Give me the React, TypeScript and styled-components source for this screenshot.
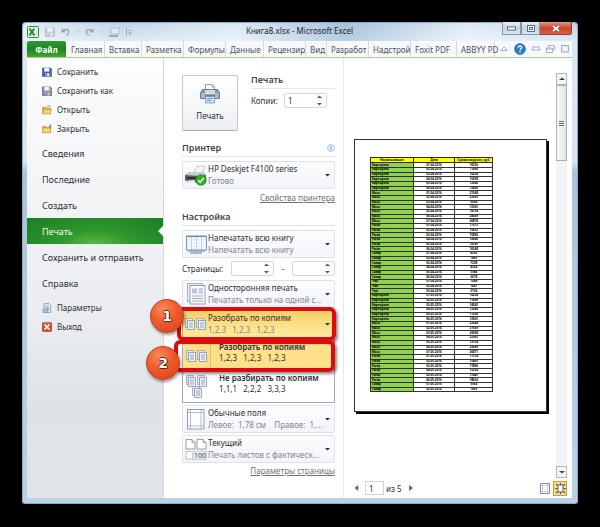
import React from 'react';
import styled, { createGlobalStyle, css } from 'styled-components';

const GlobalStyle = createGlobalStyle`
  * { box-sizing: border-box; }
  body { margin: 0; background: #000; }
  body, button, input {
    font-family: 'Noto Sans', 'Open Sans', sans-serif;
    font-size: 8px;
    color: #2b2f36;
  }
  button, input { margin: 0; padding: 0; border: 0; background: none; }
  svg { display: block; flex: none; }
`;

const Desktop = styled.div`
  display: flex;
  min-height: 100vh;
  padding: 22px 22px 23px;
  background: #000;
`;

const Window = styled.div`
  flex: 1;
  min-width: 0;
  display: flex;
  flex-direction: column;
  padding: 0 6px 6px 5px;
  border-radius: 4px 4px 3px 3px;
  background:
    linear-gradient(90deg, rgba(255, 255, 255, 0.55), transparent 18%, rgba(255, 255, 255, 0.45) 38%, rgba(120, 160, 195, 0.35) 58%, rgba(255, 255, 255, 0.5) 80%, transparent) top / 100% 19px no-repeat,
    linear-gradient(180deg, #bdd3e8 0, #dbe8f4 19px, #d8e5f1 140px, #aac4da 150px, #b9d2e7 100%);
  box-shadow: inset 0 0 0 1px #8fa9bf;
`;

const TitleBar = styled.header`
  display: grid;
  grid-template-columns: 1fr auto 1fr;
  height: 19px;
`;

const QuickAccess = styled.div`
  display: flex;
  align-items: center;
  gap: 6px;
  color: #98a7b6;
`;

const ToolButton = styled.button`
  display: flex;
  color: inherit;
`;

const Title = styled.h1`
  margin: 0;
  font-size: 8px;
  line-height: 18px;
  font-weight: 400;
  color: #1d232b;
`;

const WindowControls = styled.div`
  display: flex;
  justify-content: flex-end;
  align-items: flex-start;
`;

const WindowButton = styled.button<{ $close?: boolean }>`
  display: grid;
  place-items: center;
  width: ${p => (p.$close ? 32 : 19)}px;
  height: 13px;
  border: 1px solid #8496a8;
  border-top: 0;
  border-left-width: ${p => (p.$close ? 0 : 1)}px;
  border-radius: ${p => (p.$close ? '0 0 3px 0' : '0')};
  color: #5c6e82;
  background: linear-gradient(#e4edf6, #c3d3e2 50%, #d9e6f2);
  ${p => p.$close && css`
    color: #fff;
    background: linear-gradient(#dd9a86, #c9462a 50%, #d8603c);
    border-color: #8d4335;
  `}
`;

const Ribbon = styled.nav`
  display: grid;
  grid-template-columns: 40fr 38fr 37fr 42fr 42fr 38fr 42fr 21fr 42fr 42fr 46fr 38fr 77fr;
  height: 17px;
  background: #f6f8fa;
  border-bottom: 1px solid #a9cf93;
`;

const Tab = styled.button<{ $active?: boolean }>`
  min-width: 0;
  padding: 0 0 0 4px;
  text-align: left;
  white-space: nowrap;
  line-height: 15px;
  color: #4c535c;
  border-right: 1px solid #d5dae0;
  ${p => p.$active && css`
    padding: 0;
    margin-right: 1px;
    text-align: center;
    font-weight: 700;
    color: #fff;
    border: 0;
    border-radius: 2px 2px 0 0;
    background: linear-gradient(#2f9a33, #1b8520 50%, #3fa92f);
  `}
`;

const RibbonTools = styled.div`
  min-width: 0;
  display: flex;
  align-items: center;
  justify-content: space-between;
  padding: 0 3px 1px 5px;
  color: #a3afbb;
`;

const Backstage = styled.main`
  flex: 1;
  display: grid;
  grid-template-columns: minmax(0, 137fr) minmax(0, 180fr) minmax(0, 228fr);
  background: #fff;
`;

const Sidebar = styled.nav`
  display: flex;
  flex-direction: column;
  padding-top: 4px;
  border-right: 1px solid #d5d9de;
  background: linear-gradient(#fdfdfe 0, #f6f7f9 20%, #e9ebee 62%, #dfe3e6 78%, #e1e4e7 100%);
`;

const Group = styled.div`
  display: flex;
  flex-direction: column;
  padding-bottom: 2px;
`;

const Command = styled.button`
  display: flex;
  align-items: center;
  gap: 5px;
  height: 19px;
  padding-left: 15px;
  white-space: nowrap;
`;

const Section = styled.button<{ $active?: boolean }>`
  position: relative;
  height: 26px;
  padding-left: 15px;
  text-align: left;
  white-space: nowrap;
  font-size: 9px;
  color: ${p => (p.$active ? '#f4fbef' : '#2b2f36')};
  ${p => p.$active && css`
    background: radial-gradient(ellipse at 50% 100%, #5cb848 0, #2f9a2b 35%, #23872a 75%, #1c7d25 100%);
    &::after {
      content: '';
      position: absolute;
      right: -1px;
      top: 7px;
      border: 6px solid transparent;
      border-left-width: 0;
      border-right-color: #fff;
    }
  `}
`;

const Settings = styled.section`
  display: flex;
  flex-direction: column;
  padding: 17px 8px 0 18px;
  border-right: 1px solid #e6e8ec;
`;

const PrintRow = styled.div`
  display: flex;
  gap: 13px;
  margin-bottom: 9px;
`;

const PrintButton = styled.button`
  flex: none;
  display: flex;
  flex-direction: column;
  align-items: center;
  justify-content: space-between;
  width: 56px;
  height: 56px;
  padding: 7px 0 8px;
  line-height: 12px;
  border: 1px solid #c3c7ce;
  border-bottom-color: #a9adb5;
  border-radius: 2px;
  background: linear-gradient(#fff, #f5f6f8 60%, #eceef1);
`;

const PrintOptions = styled.div`
  flex: 1;
  min-width: 0;
`;

const Heading = styled.h2<{ $top?: boolean }>`
  display: flex;
  align-items: center;
  justify-content: space-between;
  height: ${p => (p.$top ? 14 : 17)}px;
  margin: 0 0 4px;
  padding-bottom: ${p => (p.$top ? 4 : 1)}px;
  font-size: 9px;
  line-height: 12px;
  font-weight: 600;
  color: #3f464f;
  border-bottom: 1px solid #e3e6ea;
`;

const Field = styled.div<{ $pages?: boolean }>`
  display: flex;
  align-items: center;
  justify-content: space-between;
  height: 15px;
  margin: ${p => (p.$pages ? '3px 0 4px' : '0 8px 0 0')};
`;

const Spinner = styled.div`
  display: flex;
  align-items: center;
  width: 43px;
  height: 15px;
  padding-right: 4px;
  border: 1px solid #d3d6dc;
  border-radius: 2px;
  background: #fff;
`;

const SpinnerInput = styled.input`
  flex: 1;
  min-width: 0;
  height: 13px;
  padding-left: 3px;
  outline: 0;
`;

const SpinnerArrows = styled.div`
  display: flex;
  flex-direction: column;
  gap: 3px;
  color: #555b63;
`;

const Picker = styled.button<{ $open?: boolean }>`
  display: flex;
  align-items: center;
  width: 100%;
  height: 28px;
  padding: 0 4px 0 1px;
  border: 1px solid ${p => (p.$open ? '#c6a94e' : '#dfe2e8')};
  border-radius: 2px;
  text-align: left;
  background: ${p => (p.$open ? 'linear-gradient(#f3cf66, #fbdf83 50%, #ffec9f)' : 'linear-gradient(#fcfdfe, #f3f4f8)')};
`;

const IconSlot = styled.span`
  flex: none;
  display: grid;
  place-items: center;
  width: 24px;
`;

const Lines = styled.span`
  flex: 1;
  min-width: 0;
  display: flex;
  flex-direction: column;
  line-height: 12px;
  white-space: nowrap;
`;

const Line = styled.span<{ $muted?: boolean; $strong?: boolean }>`
  white-space: pre;
  font-weight: ${p => (p.$strong ? 600 : 400)};
  color: ${p => (p.$muted ? '#82868d' : '#2b2f36')};
`;

const LinkRow = styled.div<{ $gap?: boolean }>`
  margin: ${p => (p.$gap ? '2px 0 4px' : '1px 0 0')};
  text-align: right;
  line-height: 14px;
`;

const TextLink = styled.a`
  color: #6d727a;
  text-decoration: underline;
`;

const Stack = styled.div`
  display: flex;
  flex-direction: column;
  gap: 2px;
`;

const Anchor = styled.div`
  position: relative;
`;

const Menu = styled.div`
  display: flex;
  flex-direction: column;
  margin: 1px 0 0;
  border: 1px solid #a6abb3;
  background: #fff;
`;

const MenuItem = styled.button<{ $selected?: boolean }>`
  position: relative;
  display: flex;
  height: 31px;
  text-align: left;
  background: ${p => (p.$selected ? '#fde18a' : '#fff')};
  ${Lines} { padding: 1px 0 0 8px; line-height: 11px; }
  ${IconSlot} {
    width: 28px;
    height: 100%;
    border-right: 1px solid ${p => (p.$selected ? '#dcc071' : 'transparent')};
  }
`;

const Highlight = styled.span<{ $item?: boolean }>`
  position: absolute;
  z-index: 1;
  top: ${p => (p.$item ? 0 : -3)}px;
  left: ${p => (p.$item ? -9 : -5)}px;
  right: -1px;
  height: ${p => (p.$item ? 32 : 34)}px;
  border: 4px solid #dc0b10;
  border-radius: 6px;
  box-shadow: 2px 2px 3px rgba(0, 0, 0, 0.45);
  pointer-events: none;
`;

const Badge = styled.span<{ $item?: boolean }>`
  position: absolute;
  z-index: 2;
  top: ${p => (p.$item ? 6 : -11)}px;
  left: ${p => (p.$item ? -37 : -32)}px;
  display: grid;
  place-items: center;
  width: 34px;
  height: 34px;
  border: 1px solid #b9411c;
  border-radius: 50%;
  font: 700 14px 'DejaVu Sans', sans-serif;
  color: #fff;
  text-shadow: 1px 0 #5b2410, -1px 0 #5b2410, 0 1px #5b2410, 0 -1px #5b2410;
  background: radial-gradient(circle at 38% 28%, #f98a5c 0, #ee5a2c 45%, #d8401a 100%);
  box-shadow: 1px 2px 3px rgba(0, 0, 0, 0.4);
`;

const Preview = styled.section`
  display: flex;
  flex-direction: column;
  padding: 15px 5px 2px 10px;
`;

const PreviewBody = styled.div`
  flex: 1;
  display: flex;
  align-items: center;
  gap: 9px;
`;

const Paper = styled.div`
  flex: 1;
  aspect-ratio: 192 / 271;
  display: flex;
  align-items: flex-start;
  padding: 17px 0 0 15px;
  border: 1px solid #333;
  background: #fff;
  box-shadow: 2px 2px 0 #000;
`;

const Sheet = styled.table`
  width: 70%;
  height: 235px;
  table-layout: fixed;
  border-collapse: collapse;
  font-size: 3px;
  line-height: 3px;
  font-weight: 700;
  color: #000;
`;

const Cell = styled.td<{ $name?: boolean }>`
  height: 4px;
  padding: ${p => (p.$name ? '0 0 0 1px' : '0')};
  overflow: hidden;
  border: 1px solid ${p => (p.$name ? '#26361a' : '#333')};
  text-align: ${p => (p.$name ? 'left' : 'center')};
  background: ${p => (p.$name ? '#92d050' : '#fff')};
`;

const HeadCell = styled.th<{ $width: number }>`
  width: ${p => p.$width}%;
  height: 5px;
  padding: 0;
  white-space: nowrap;
  border: 1px solid #333300;
  background: #ffff00;
`;

const ScrollBar = styled.div`
  align-self: stretch;
  width: 11px;
  display: flex;
  flex-direction: column;
  background: #f3f3f5;
`;

const ScrollButton = styled.button`
  display: grid;
  place-items: center;
  height: 12px;
  border: 1px solid #b4b8be;
  background: #f4f5f7;
  color: #3d4248;
`;

const ScrollThumb = styled.div`
  display: grid;
  place-items: center;
  height: 76px;
  border: 1px solid #adb1b7;
  background: linear-gradient(90deg, #f7f7f8, #e3e5e8);
  color: #70757c;
`;

const ScrollTrack = styled.div`
  flex: 1;
`;

const Footer = styled.footer`
  display: flex;
  align-items: center;
  height: 18px;
  padding-top: 2px;
  gap: 5px;
  color: #5a5f66;
`;

const PageInput = styled.input`
  width: 19px;
  height: 14px;
  padding-left: 3px;
  border: 1px solid #d0d3d8;
`;

const PageTotal = styled.span`
  margin: 0 1px 0 -3px;
  color: #2b2f36;
`;

const ViewButton = styled.button<{ $on?: boolean; $first?: boolean }>`
  display: grid;
  place-items: center;
  width: 14px;
  height: 15px;
  margin-left: ${p => (p.$first ? 'auto' : '-4px')};
  border: 1px solid ${p => (p.$on ? '#d49a26' : 'transparent')};
  background: ${p => (p.$on ? '#fbdc83' : 'none')};
`;

const Triangle = ({ dir, size = 5 }: { dir: 'up' | 'down' | 'left' | 'right'; size?: number }) => {
  const shape = {
    up: 'M0 6L5 1L10 6Z', down: 'M0 2L5 7L10 2Z', left: 'M7 0L1 5L7 10Z', right: 'M2 0L8 5L2 10Z',
  }[dir];
  const tall = dir === 'left' || dir === 'right';
  return (
    <svg width={size} height={tall ? size : Math.round(size * 0.7)} viewBox={tall ? '0 0 10 10' : '0 0 10 8'} preserveAspectRatio="none">
      <path d={shape} fill="currentColor" />
    </svg>
  );
};

const ExcelLogo = () => (
  <svg width="12" height="12" viewBox="0 0 12 12">
    <rect x="0.5" y="0.5" width="11" height="11" rx="1" fill="#e9f6e6" stroke="#2e8b37" />
    <path d="M8 2h3v8H8z" fill="#fff" /><path d="M8.5 4h2M8.500 6h2M8.500 8h2" stroke="#7cb97d" strokeWidth=".7" />
    <path d="M2.500 2.500L7.500 9.500M7.300 2.500L2.500 9.500" stroke="#1b8a2b" strokeWidth="1.900" />
  </svg>
);

const Disk = ({ pale, pencil }: { pale?: boolean; pencil?: boolean }) => (
  <svg width="10" height="10" viewBox="0 0 10 10">
    <path d="M.5 1h8l1 1v7.500H.5z" fill={pale ? '#c7d2dd' : pencil ? '#8a91bd' : '#4a62ad'} stroke={pale ? '#9aa9b8' : '#35478a'} strokeWidth=".6" />
    <path d="M2.300 1h5v3.600h-5z" fill="#f0f4fb" /><path d="M3 6.300h4.500v3H3z" fill="#e3e8f2" /><path d="M3.500 6.800h1.200v2H3.500z" fill={pale ? '#8e9dac' : '#27356d'} />
    {pencil && <path d="M4.500 7.500L8.800 2.600l1 1L5.500 8.500l-1.500.5z" fill="#e8b259" stroke="#8a6330" strokeWidth=".4" />}
  </svg>
);

const Undo = ({ flip }: { flip?: boolean }) => (
  <svg width="9" height="8" viewBox="0 0 9 8">
    <g transform={flip ? 'matrix(-1 0 0 1 9 0)' : undefined} fill="none" stroke="currentColor" strokeWidth="1.400">
      <path d="M1.200 .8v3h3M1.400 3.600C3.500.6 7.800.8 7.800 4c0 1.600-1 2.600-2.600 3.400" />
    </g>
  </svg>
);

const Folder = ({ close }: { close?: boolean }) => (
  <svg width="10" height="10" viewBox="0 0 11 10">
    <path d="M.5 2h3.500l1 1.200h4.500V9H.5z" fill="#e2a83c" stroke="#a97a24" strokeWidth=".5" />
    <path d={close ? 'M.7 4h8.700v5H.7z' : 'M2.300 4.600h8.300L9 9.200H.7z'} fill="#fbd676" stroke="#b98a2f" strokeWidth=".5" />
    <path d={close ? 'M9 4V1M7.500 2L9 .6 10.500 2' : 'M5.500 1.500C7 .2 8.800.6 9.500 2.200'} fill="none" stroke="#4a6b96" strokeWidth=".9" />
  </svg>
);

const OptionsIcon = () => (
  <svg width="10" height="10" viewBox="0 0 10 10">
    <path d="M2 .6h5l1.700 1.800v7H2z" fill="#e7edf5" stroke="#73859d" strokeWidth=".7" />
    <path d="M3.500 3h3M3.500 4.800h2" stroke="#8fa4c0" strokeWidth=".8" />
    <path d="M1 6h4v3.300H1z" fill="#b5c4d8" stroke="#5f7391" strokeWidth=".5" /><path d="M6 4v4" stroke="#506d99" />
  </svg>
);

const ExitIcon = () => (
  <svg width="10" height="10" viewBox="0 0 10 10">
    <rect x=".4" y=".4" width="9.200" height="9.200" rx="1" fill="#d1512e" stroke="#983519" strokeWidth=".7" />
    <path d="M2.500 2.500l5 5M7.500 2.500l-5 5" stroke="#fff" strokeWidth="1.500" /><path d="M1 1h8" stroke="#f0a187" strokeWidth=".6" />
  </svg>
);

const PrinterIcon = () => (
  <svg width="22" height="22" viewBox="0 0 22 22">
    <path d="M6.500 8V1.500h6.500L15.500 4v4z" fill="#fff" stroke="#7d8793" strokeWidth=".8" /><path d="M13 1.500V4h2.500" fill="none" stroke="#7d8793" strokeWidth=".7" />
    <path d="M3.500 6.500h15l2 3v6H1.500v-6z" fill="#8d98a7" stroke="#5f6975" strokeWidth=".8" />
    <path d="M6 7h10v5H6z" fill="#d5dbe3" /><path d="M6 11.500h10v3H6z" fill="#727d8c" /><path d="M2.200 10h3.600v5H2.200zM16.200 10h3.600v5h-3.600z" fill="#b0bac6" />
    <path d="M6.500 13.500h9v6.500h-9z" fill="#c9e1f6" stroke="#6f95ba" strokeWidth=".7" /><path d="M8 15.500h6M8 17.500h4" stroke="#5f93c4" strokeWidth=".9" />
  </svg>
);

const DeskjetIcon = () => (
  <svg width="24" height="22" viewBox="0 0 24 22">
    <path d="M10 9l3-7h8l-3 8z" fill="#f4f6f9" stroke="#b3bac4" strokeWidth=".7" />
    <path d="M1 11l5-3h13l3 3v6l-5 2H4l-3-3z" fill="#5d636b" /><path d="M1 11l5-3h13l3 3-6 1z" fill="#c8cdd4" />
    <path d="M3 13h11v2H3z" fill="#2c3036" /><path d="M2 17l8-1 2 3H4z" fill="#eaedf1" />
    <circle cx="17" cy="16" r="5.300" fill="#2fae22" stroke="#147b12" strokeWidth=".6" />
    <path d="M14.200 16.200l2 2 3.600-4.200" fill="none" stroke="#fff" strokeWidth="1.600" />
  </svg>
);

const BookIcon = () => (
  <svg width="21" height="19" viewBox="0 0 21 19">
    <path d="M2 16h17M4 18h12" stroke="#6c7fa0" strokeWidth="1.200" />
    <rect x=".6" y="1" width="19.800" height="14" fill="#f5f9fe" stroke="#6f85a8" strokeWidth=".9" />
    <path d="M5.500 1v14M10.500 1v14M15.500 1v14" stroke="#a9bedb" strokeWidth=".7" /><path d="M1 4.500h19M1 8h19M1 11.500h19" stroke="#d5e0ee" strokeWidth=".5" />
    <path d="M1 1.600h19" stroke="#6f85a8" />
  </svg>
);

const OneSideIcon = () => (
  <svg width="19" height="22" viewBox="0 0 19 22">
    <rect x=".5" y=".5" width="15" height="18" fill="#e8ecf4" stroke="#9aa4b8" strokeWidth=".8" />
    <rect x="3" y="2.500" width="15" height="18.500" fill="#fbfcfe" stroke="#7e89a0" strokeWidth=".8" />
    <path d="M5 5.500h5v5H5z" fill="#b5c3dc" /><path d="M11.500 6h4.500M11.500 8h4.500M11.500 10h4.500M5 13h11M5 15.500h11M5 18h11" stroke="#8592ac" strokeWidth=".8" />
  </svg>
);

const PagePile = ({ x, y }: { x: number; y: number }) => (
  <g transform={`translate(${x} ${y})`}>
    <path d="M.5 .5h7v9h-7z" fill="#dfe6f2" stroke="#8c98b3" strokeWidth=".7" />
    <path d="M2.500 2.500h7v9h-7z" fill="#eef2f9" stroke="#78859f" strokeWidth=".7" />
    <path d="M4 5h4M4 7h4M4 9h4" stroke="#7f93b8" strokeWidth=".8" />
  </g>
);

const CollatedIcon = () => (
  <svg width="22" height="14" viewBox="0 0 22 14"><PagePile x={0} y={1} /><PagePile x={11} y={1} /></svg>
);

const UncollatedIcon = () => (
  <svg width="22" height="24" viewBox="0 0 22 24"><PagePile x={0} y={0} /><PagePile x={11} y={0} /><PagePile x={6} y={11} /></svg>
);

const MarginsIcon = () => (
  <svg width="18" height="21" viewBox="0 0 18 21">
    <rect x=".5" y=".5" width="16.500" height="19.500" fill="#fcfdff" stroke="#8893a8" strokeWidth=".9" />
    <path d="M3.500 1v19M14 1v19M1 3.500h16M1 17h16" stroke="#9bb0d2" strokeWidth=".8" />
  </svg>
);

const ScaleIcon = () => (
  <svg width="22" height="21" viewBox="0 0 22 21">
    <path d="M1 .5h6l3 3V10H1zM12 .5h6l3 3V10h-9z" fill="#fff" stroke="#7c8697" strokeWidth=".8" />
    <path d="M7 .5v3h3M18 .5v3h3" fill="none" stroke="#7c8697" strokeWidth=".7" /><path d="M1 20v-7.500h5l2 2V20z" fill="#fff" stroke="#a3abb8" strokeWidth=".7" />
    <rect x="8" y="12" width="13.500" height="8.500" fill="#eceff3" stroke="#9ba3af" strokeWidth=".5" />
    <text x="9" y="19" fontSize="7" fill="#343940" fontFamily="Noto Sans">100</text>
  </svg>
);

const TABS = [
  'Главная', 'Вставка', 'Разметка', 'Формулы', 'Данные', 'Рецензир', 'Вид', 'Разработ', 'Надстрой', 'Foxit PDF', 'ABBYY PD',
];

const MORE_SECTIONS = ['Сведения', 'Последние', 'Создать', 'Печать', 'Сохранить и отправить', 'Справка'];

const GROUPS: [string, number[]][] = [
  ['Картофель', [10526, 11896, 10254, 15698, 12546, 12456]],
  ['Мясо', [21548, 22569, 9568, 12365, 18754, 24589, 26878]],
  ['Рыба', [17512, 15652, 15896, 18546, 14785, 16548]],
  ['Сахар', [8256, 7865, 7238, 4358, 5986, 2678]],
  ['Чай', [1048, 1687, 2154]],
  ['Картофель', [10254, 11896, 14545, 12548, 11256, 12565]],
  ['Мясо', [22548, 21569, 20568, 22365, 19754, 23589, 26871]],
  ['Рыба', [17318, 15465, 11896, 15254, 17845, 18654]],
  ['Сахар', [9564, 7865]],
];
const ROWS = GROUPS.flatMap(([name, sums], g) =>
  sums.map((sum, i) => ({ name, sum, date: `0${i + 1}.0${g > 4 ? 5 : 4}.2016` })));

const SpinBox = ({ label, id, value = '' }: { label: string; id: string; value?: string }) => (
  <Spinner>
    <SpinnerInput id={id} aria-label={label} defaultValue={value} />
    <SpinnerArrows>
      <ToolButton aria-label="Больше"><Triangle dir="up" /></ToolButton>
      <ToolButton aria-label="Меньше"><Triangle dir="down" /></ToolButton>
    </SpinnerArrows>
  </Spinner>
);

const Choice = ({ icon, title, note, open }: { icon: React.ReactNode; title: string; note: string; open?: boolean }) => (
  <Picker aria-haspopup="listbox" aria-expanded={!!open} $open={open}>
    <IconSlot>{icon}</IconSlot>
    <Lines><Line>{title}</Line><Line $muted>{note}</Line></Lines>
    <Triangle dir="down" />
  </Picker>
);

export default function App() {
  return (
    <Desktop>
      <GlobalStyle />
      <Window>
        <TitleBar>
          <QuickAccess>
            <ExcelLogo />
            <ToolButton aria-label="Сохранить"><Disk pale /></ToolButton>
            <ToolButton aria-label="Отменить"><Undo /></ToolButton>
            <Triangle dir="down" size={3} />
            <ToolButton aria-label="Вернуть"><Undo flip /></ToolButton>
            <Triangle dir="down" size={3} />
            <ToolButton aria-label="Просмотр">
              <svg width="11" height="10" viewBox="0 0 11 10"><path d="M2 1h8v6H2z" fill="#e2eaf2" stroke="#b0bdca" /><path d="M0 9h9" stroke="#8797a8" strokeWidth="1.400" /></svg>
            </ToolButton>
            <svg width="6" height="8" viewBox="0 0 6 8"><path d="M.5 0v8M2.500 2.500h3" stroke="currentColor" /><path d="M2 4.500h4L4 7z" fill="currentColor" /></svg>
          </QuickAccess>
          <Title>Книга8.xlsx - Microsoft Excel</Title>
          <WindowControls>
            <WindowButton aria-label="Свернуть"><svg width="9" height="5" viewBox="0 0 9 5"><rect x=".5" y="1" width="8" height="3" fill="#fff" stroke="currentColor" /></svg></WindowButton>
            <WindowButton aria-label="Развернуть"><svg width="8" height="7" viewBox="0 0 8 7"><rect x=".5" y=".5" width="7" height="6" fill="#fff" stroke="currentColor" /><rect x="2.500" y="2.500" width="3" height="2" fill="#fff" stroke="currentColor" /></svg></WindowButton>
            <WindowButton $close aria-label="Закрыть окно"><svg width="8" height="7" viewBox="0 0 8 7"><path d="M1 1l6 5M7 1L1 6" stroke="#7b3a2e" strokeWidth="2.800" /><path d="M1 1l6 5M7 1L1 6" stroke="#fff" strokeWidth="1.800" /></svg></WindowButton>
          </WindowControls>
        </TitleBar>
        <Ribbon>
          <Tab $active>Файл</Tab>
          {TABS.map(name => <Tab key={name}>{name}</Tab>)}
          <RibbonTools>
            <svg width="8" height="6" viewBox="0 0 8 6"><path d="M.8 4.500L4 1l3.200 3.500z" fill="#fff" stroke="currentColor" /></svg>
            <svg width="12" height="12" viewBox="0 0 12 12">
              <circle cx="6" cy="6" r="5.400" fill="#2d7cc4" stroke="#1d5b9a" strokeWidth=".7" />
              <path d="M4.200 4.700C4.200 2.400 8 2.500 7.800 4.600 7.700 5.800 6 5.900 6 7.300M6 8.300v1.400" fill="none" stroke="#fff" strokeWidth="1.300" />
            </svg>
            <svg width="8" height="5" viewBox="0 0 8 5"><rect x=".5" y="1" width="7" height="3" fill="#fff" stroke="currentColor" /></svg>
            <svg width="9" height="8" viewBox="0 0 9 8"><path d="M2.500 2.500V.5h6v4H6.500" fill="#fff" stroke="currentColor" /><path d="M.5 3h6v4.500h-6zM.5 4h6" fill="#fff" stroke="currentColor" /></svg>
            <svg width="8" height="8" viewBox="0 0 8 8"><rect x=".5" y=".5" width="7" height="6.500" fill="#e7edf3" stroke="currentColor" /><path d="M2.500 2.500l3 3M5.500 2.500l-3 3" stroke="#fff" /></svg>
          </RibbonTools>
        </Ribbon>
        <Backstage>
          <Sidebar>
            <Group>
              <Command><Disk />Сохранить</Command>
              <Command><Disk pencil />Сохранить как</Command>
              <Command><Folder />Открыть</Command>
              <Command><Folder close />Закрыть</Command>
            </Group>
            <Group>
              {MORE_SECTIONS.map(name => <Section key={name} $active={name === 'Печать'}>{name}</Section>)}
            </Group>
            <Group>
              <Command><OptionsIcon />Параметры</Command>
              <Command><ExitIcon />Выход</Command>
            </Group>
          </Sidebar>

          <Settings>
            <PrintRow>
              <PrintButton><PrinterIcon />Печать</PrintButton>
              <PrintOptions>
                <Heading $top>Печать</Heading>
                <Field>
                  <label htmlFor="copies">Копии:</label>
                  <SpinBox id="copies" label="Копии" value="1" />
                </Field>
              </PrintOptions>
            </PrintRow>
            <Heading>
              Принтер
              <svg width="8" height="8" viewBox="0 0 8 8"><circle cx="4" cy="4" r="3.400" fill="#fff" stroke="#7fb0dd" strokeWidth=".8" /><path d="M4 3.300V6M4 1.700v1" stroke="#3f82c4" /></svg>
            </Heading>
            <Choice icon={<DeskjetIcon />} title="HP Deskjet F4100 series" note="Готово" />
            <LinkRow $gap><TextLink href="#printer">Свойства принтера</TextLink></LinkRow>
            <Heading>Настройка</Heading>
            <Choice icon={<BookIcon />} title="Напечатать всю книгу" note="Напечатать всю книгу" />
            <Field $pages>
              <label htmlFor="from">Страницы:</label>
              <SpinBox id="from" label="Страницы с" />
              <span>-</span>
              <SpinBox id="to" label="Страницы по" />
            </Field>
            <Stack>
              <Choice icon={<OneSideIcon />} title="Односторонняя печать" note="Печатать только на одной с..." />
              <Anchor>
                <Choice open icon={<CollatedIcon />} title="Разобрать по копиям" note="1,2,3   1,2,3   1,2,3" />
                <Highlight />
                <Badge>1</Badge>
                <Menu role="listbox">
                  <MenuItem role="option" aria-selected $selected>
                    <IconSlot><CollatedIcon /></IconSlot>
                    <Lines><Line $strong>Разобрать по копиям</Line><Line>1,2,3   1,2,3   1,2,3</Line></Lines>
                    <Highlight $item />
                    <Badge $item>2</Badge>
                  </MenuItem>
                  <MenuItem role="option" aria-selected={false}>
                    <IconSlot><UncollatedIcon /></IconSlot>
                    <Lines><Line $strong>Не разбирать по копиям</Line><Line>1,1,1   2,2,2   3,3,3</Line></Lines>
                  </MenuItem>
                </Menu>
              </Anchor>
              <Choice icon={<MarginsIcon />} title="Обычные поля" note="Левое:  1,78 см    Правое:  1,..." />
              <Choice icon={<ScaleIcon />} title="Текущий" note="Печать листов с фактическ..." />
            </Stack>
            <LinkRow><TextLink href="#page">Параметры страницы</TextLink></LinkRow>
          </Settings>

          <Preview>
            <PreviewBody>
              <Paper>
                <Sheet>
                  <thead>
                    <tr>
                      <HeadCell $width={35}>Наименование</HeadCell>
                      <HeadCell $width={34}>Дата</HeadCell>
                      <HeadCell $width={31}>Сумма выручки, руб.</HeadCell>
                    </tr>
                  </thead>
                  <tbody>
                    {ROWS.map((row, i) => (
                      <tr key={i}><Cell $name>{row.name}</Cell><Cell>{row.date}</Cell><Cell>{row.sum}</Cell></tr>
                    ))}
                  </tbody>
                </Sheet>
              </Paper>
              <ScrollBar>
                <ScrollButton aria-label="Вверх"><Triangle dir="up" size={6} /></ScrollButton>
                <ScrollThumb><svg width="5" height="5" viewBox="0 0 5 5"><path d="M0 .5h5M0 2.500h5M0 4.500h5" stroke="currentColor" /></svg></ScrollThumb>
                <ScrollTrack />
                <ScrollButton aria-label="Вниз"><Triangle dir="down" size={6} /></ScrollButton>
              </ScrollBar>
            </PreviewBody>
            <Footer>
              <ToolButton aria-label="Предыдущая страница"><Triangle dir="left" size={6} /></ToolButton>
              <PageInput aria-label="Страница" defaultValue="1" />
              <PageTotal>из 5</PageTotal>
              <ToolButton aria-label="Следующая страница"><Triangle dir="right" size={6} /></ToolButton>
              <ViewButton $first aria-label="Показать поля"><svg width="10" height="11" viewBox="0 0 10 11"><path d="M.5.500h9v10h-9z" fill="#fff" stroke="#8290a6" /><path d="M2.500 1v9M7.500 1v9M1 2.500h8M1 8.500h8" stroke="#b4c3da" strokeWidth=".7" /></svg></ViewButton>
              <ViewButton $on aria-label="По размеру страницы"><svg width="11" height="11" viewBox="0 0 11 11"><path d="M3 2h5v7H3z" fill="#fff" stroke="#50617c" /><path d="M0 5.500h2.500M8.500 5.500H11M5.500 0v2M5.500 9v2M1 1l1.500 1.500M10 1L8.500 2.500M1 10l1.500-1.500M10 10L8.500 8.500" stroke="#3a5b90" strokeWidth="1.200" /></svg></ViewButton>
            </Footer>
          </Preview>
        </Backstage>
      </Window>
    </Desktop>
  );
}
